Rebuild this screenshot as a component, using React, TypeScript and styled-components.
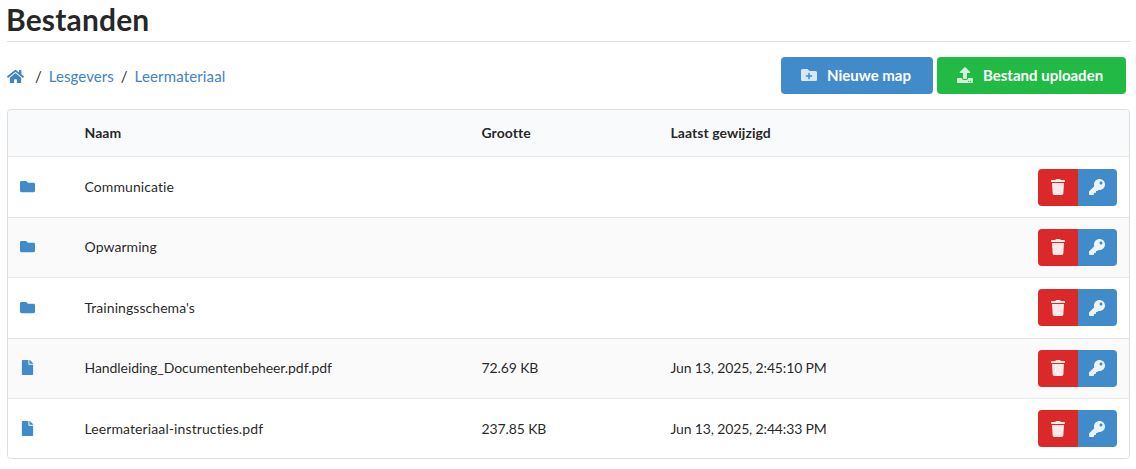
import React from 'react';
import styled, { createGlobalStyle } from 'styled-components';
import { FaHome, FaFolderPlus, FaUpload, FaFolder, FaFile, FaTrash, FaKey } from 'react-icons/fa';

const Global = createGlobalStyle`
  * { box-sizing: border-box; }
  body {
    margin: 0; background: #fff; color: rgba(0,0,0,.87);
    font: 14px/20px Lato, sans-serif; font-variant-ligatures: none;
  }
`;
const Page = styled.main`padding: 0 6px 0 7px;`;
const Title = styled.h1`
  margin: 0; height: 42px; border-bottom: 1px solid rgba(34,36,38,.15);
  font-size: 30px; line-height: 38px; font-weight: 700; letter-spacing: .15px; text-indent: -1px;
`;
const Toolbar = styled.div`
  display: flex; justify-content: space-between; align-items: center;
  padding: 15px 4px 15px 0;
`;
const Crumbs = styled.nav`display: flex; align-items: center; font-size: 15px;`;
const Crumb = styled.a<{ $spacing?: number }>`
  color: #4183c4; display: flex; letter-spacing: ${p => p.$spacing ?? 0}px;
  svg { margin-top: 1px; }
`;
const Slash = styled.span<{ $first?: boolean }>`margin: 0 ${p => p.$first ? '7px 0 11px' : '7px'};`;
const Actions = styled.div`display: flex; gap: 4px;`;
const Button = styled.button<{ $color: string; $width: number }>`
  display: flex; align-items: center; width: ${p => p.$width}px; height: 37px;
  padding: 0 0 2px 20px; border: 0; border-radius: 4px; white-space: nowrap;
  background: ${p => p.$color}; color: #fff; font: 700 15px Lato, sans-serif;
  svg { margin: 1px 10px 0 0; opacity: .8; }
`;
const Table = styled.section`border: 1px solid rgba(34,36,38,.15); border-radius: 4px; overflow: hidden;`;
const Row = styled.div<{ $odd?: boolean }>`
  display: grid; grid-template-columns: 76.5px 397px 189px 1fr auto; align-items: center;
  height: 60.4px; padding-right: 12px; border-top: 1px solid rgba(34,36,38,.1);
  background: ${p => p.$odd ? '#fafafa' : '#fff'};
`;
const Head = styled(Row)`height: 46.4px; border: 0; background: #f9fafb; font-weight: 700; letter-spacing: .05px;`;
const Kind = styled.span`display: flex; padding: 0 0 1px 11.5px; color: #428bca;`;
const Name = styled.span<{ $spacing: number }>`letter-spacing: ${p => p.$spacing}px;`;
const Modified = styled.span`letter-spacing: -.15px;`;
const Size = styled.span`letter-spacing: -.12px;`;
const Group = styled.div`display: flex; border-radius: 4px; overflow: hidden;`;
const IconButton = styled.button<{ $color: string }>`
  display: flex; align-items: center; justify-content: center; width: 39.5px; height: 37px; padding: 0;
  border: 0; background: ${p => p.$color}; color: #fff;
  svg { opacity: .9; }
`;

const files = [
  { name: 'Communicatie', spacing: 0.08 },
  { name: 'Opwarming', spacing: 0.06 },
  { name: "Trainingsschema's", spacing: 0.06 },
  { name: 'Handleiding_Documentenbeheer.pdf.pdf', spacing: -0.06, size: '72.69 KB', date: 'Jun 13, 2025, 2:45:10 PM' },
  { name: 'Leermateriaal-instructies.pdf', spacing: 0.1, size: '237.85 KB', date: 'Jun 13, 2025, 2:44:33 PM' },
];

export default function App() {
  return (
    <Page>
      <Global />
      <Title>Bestanden</Title>
      <Toolbar>
        <Crumbs>
          <Crumb><FaHome size={17} /></Crumb><Slash $first>/</Slash>
          <Crumb $spacing={0.08}>Lesgevers</Crumb><Slash>/</Slash><Crumb $spacing={0.15}>Leermateriaal</Crumb>
        </Crumbs>
        <Actions>
          <Button $color="#428bca" $width={152}><FaFolderPlus size={16} />Nieuwe map</Button>
          <Button $color="#21ba45" $width={189}><FaUpload size={16} />Bestand uploaden</Button>
        </Actions>
      </Toolbar>
      <Table>
        <Head><span /><span>Naam</span><span>Grootte</span><span>Laatst gewijzigd</span></Head>
        {files.map((f, i) => (
          <Row key={f.name} $odd={i % 2 === 1}>
            <Kind>{f.size ? <FaFile size={15} /> : <FaFolder size={15} />}</Kind>
            <Name $spacing={f.spacing}>{f.name}</Name><Size>{f.size}</Size><Modified>{f.date}</Modified>
            <Group>
              <IconButton $color="#db2828"><FaTrash size={16} /></IconButton>
              <IconButton $color="#428bca"><FaKey size={16} /></IconButton>
            </Group>
          </Row>
        ))}
      </Table>
    </Page>
  );
}
